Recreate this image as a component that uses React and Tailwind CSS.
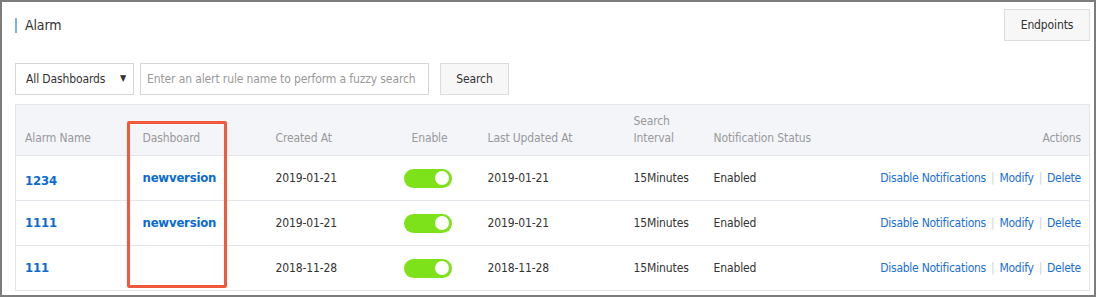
import React from "react";

const rows = [
  { name: "1234", dash: "newversion", created: "2019-01-21", updated: "2019-01-21", nudge: true },
  { name: "1111", dash: "newversion", created: "2019-01-21", updated: "2019-01-21" },
  { name: "111", dash: "", created: "2018-11-28", updated: "2018-11-28" },
];

function Toggle() {
  return (
    <span className="inline-flex items-center justify-end w-[48px] h-[19px] mr-[4px] rounded-full bg-[#7ee21a] pr-[3px] align-middle">
      <span className="w-[14px] h-[14px] rounded-full bg-white" />
    </span>
  );
}

export default function App() {
  return (
    <div
      className="w-[1096px] h-[297px] border-2 border-[#7c7c7c] bg-white text-[12px] text-[#333] tracking-[-0.12px]"
      style={{ fontFamily: '"DejaVu Sans Condensed", Tahoma, "Liberation Sans", sans-serif' }}
    >
      <div className="pl-[13px] pr-[4px] pt-[7px]">
        {/* header */}
        <div className="flex items-start justify-between">
          <div className="flex items-center h-[15px] mt-[9px] border-l-2 border-[#7fb3e0] pl-[8px] text-[14px] text-[#333]">
            Alarm
          </div>
          <button className="w-[86px] h-[32px] bg-[#f7f7f7] border border-[#dcdcdc] text-[12px] text-[#333]">
            Endpoints
          </button>
        </div>

        {/* filters */}
        <div className="flex items-center mt-[22px] h-[32px]">
          <div className="flex items-center justify-between w-[119px] h-full border border-[#d7d7d7] pl-[10px] pr-[7px]">
            <span>All Dashboards</span>
            <span className="text-[9px] text-[#333]">▼</span>
          </div>
          <div className="ml-[6px] w-[289px] h-full border border-[#d7d7d7] flex items-center pl-[6px] text-[#999]">
            Enter an alert rule name to perform a fuzzy search
          </div>
          <button className="ml-[11px] w-[69px] h-full bg-[#f7f7f7] border border-[#dcdcdc] text-[#333]">
            Search
          </button>
        </div>

        {/* table */}
        <div className="relative mt-[9px]">
          <table className="w-full table-fixed border-collapse border border-[#e2e5ea]">
            <colgroup>
              <col className="w-[118px]" />
              <col className="w-[133px]" />
              <col className="w-[114px]" />
              <col className="w-[98px]" />
              <col className="w-[146px]" />
              <col className="w-[80px]" />
              <col className="w-[150px]" />
              <col />
            </colgroup>
            <thead>
              <tr className="h-[51px] bg-[#f4f5f9] text-[#999] leading-[17px]">
                <th className="font-normal text-left align-bottom pl-[9px] pb-[8px]">Alarm Name</th>
                <th className="font-normal text-left align-bottom pl-[9px] pb-[8px]">Dashboard</th>
                <th className="font-normal text-left align-bottom pl-[9px] pb-[8px]">Created At</th>
                <th className="font-normal text-center align-bottom pb-[8px]">Enable</th>
                <th className="font-normal text-left align-bottom pl-[9px] pb-[8px]">Last Updated At</th>
                <th className="font-normal text-left align-bottom pl-[9px] pb-[8px]">
                  Search
                  <br />
                  Interval
                </th>
                <th className="font-normal text-left align-bottom pl-[9px] pb-[8px]">Notification Status</th>
                <th className="font-normal text-right align-bottom pr-[8px] pb-[8px]">Actions</th>
              </tr>
            </thead>
            <tbody>
              {rows.map((r) => (
                <tr key={r.name} className="h-[45px] border-t border-[#e2e5ea]">
                  <td className={`pl-[9px] text-[13px] font-bold text-[#0a6bd1] ${r.nudge ? "pt-[6px]" : ""}`}>
                    {r.name}
                  </td>
                  <td className="pl-[9px] text-[13px] font-bold text-[#0a6bd1] tracking-[-0.2px]">{r.dash}</td>
                  <td className="pl-[9px]">{r.created}</td>
                  <td className="text-center">
                    <Toggle />
                  </td>
                  <td className="pl-[9px]">{r.updated}</td>
                  <td className="pl-[9px]">15Minutes</td>
                  <td className="pl-[9px]">Enabled</td>
                  <td className="text-right pr-[8px] text-[#1a6fd6] whitespace-nowrap tracking-[-0.25px]">
                    <span>Disable Notifications</span>
                    <span className="text-[#d0d0d0] mx-[5px]">|</span>
                    <span>Modify</span>
                    <span className="text-[#d0d0d0] mx-[5px]">|</span>
                    <span>Delete</span>
                  </td>
                </tr>
              ))}
            </tbody>
          </table>
          {/* highlight box */}
          <div className="absolute left-[112px] top-[17px] w-[100px] h-[167px] border-[3px] border-[#f05a3b] rounded-[2px] pointer-events-none" />
        </div>
      </div>
    </div>
  );
}
